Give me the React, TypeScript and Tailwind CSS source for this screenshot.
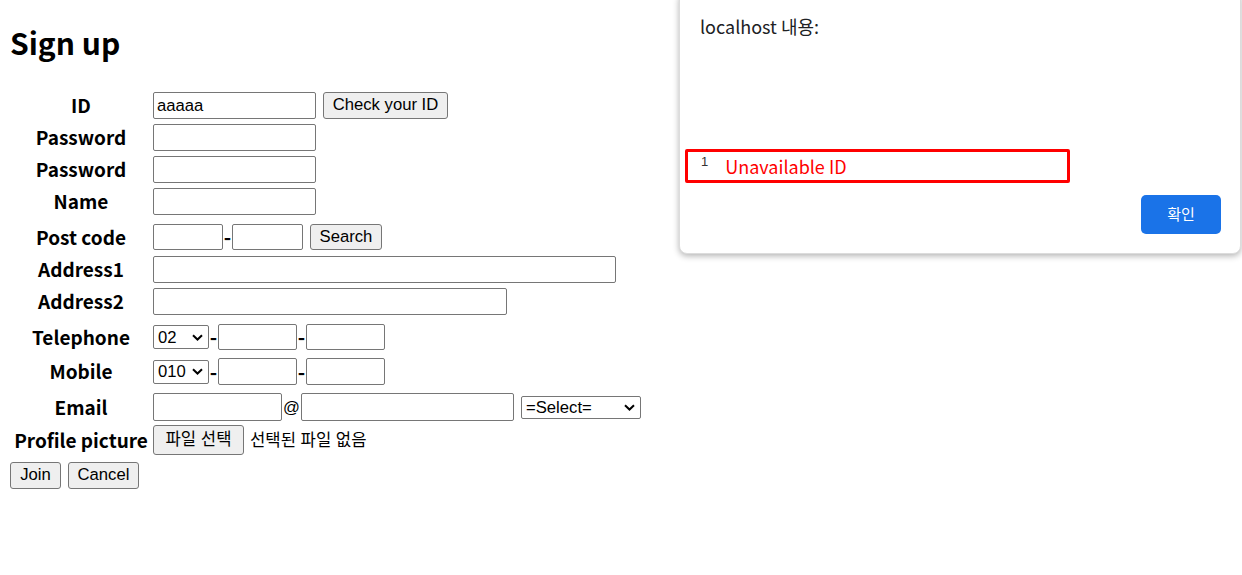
import React from 'react';

const sans = "font-['Liberation_Sans','Noto_Sans_CJK_KR',sans-serif]";
const kr = "font-['Noto_Sans_CJK_KR',sans-serif]";

const inputBase = `border border-[#767676] rounded-[2px] bg-white px-[3px] text-[16.67px] text-black outline-none ${sans}`;
const btnBase = `border border-[#767676] rounded-[3px] bg-[#efefef] text-[16.67px] text-black leading-none flex items-center justify-center ${sans}`;

function Input({ w, h = 'h-[27px]', value }: { w: string; h?: string; value?: string }) {
    return <input type="text" defaultValue={value} className={`${inputBase} ${w} ${h}`} />;
}

function Dash() {
    return <span className={`w-[9px] text-center text-[20px] leading-none font-bold text-black ${kr}`}>-</span>;
}

function Chevron() {
    return (
        <svg width="11" height="7" viewBox="0 0 11 7">
            <path d="M1 1.2 L5.5 5.5 L10 1.2" fill="none" stroke="#000" strokeWidth="2" />
        </svg>
    );
}

function FakeSelect({ w, h = 'h-[24px]', label }: { w: string; h?: string; label: string }) {
    return (
        <div className={`${w} ${h} border border-[#767676] rounded-[2px] bg-white flex items-center justify-between pl-[4px] pr-[5px] text-[16.67px] text-black ${sans}`}>
            <span>{label}</span>
            <Chevron />
        </div>
    );
}

const rows: { label: string; h: string; content: React.ReactNode }[] = [
    {
        label: 'ID',
        h: 'h-[31px]',
        content: (
            <>
                <Input w="w-[163px]" value="aaaaa" />
                <button className={`${btnBase} ml-[7px] w-[125px] h-[27px]`}>Check your ID</button>
            </>
        ),
    },
    { label: 'Password', h: 'h-[33px]', content: <Input w="w-[163px]" /> },
    { label: 'Password', h: 'h-[31px]', content: <Input w="w-[163px]" /> },
    { label: 'Name', h: 'h-[33px]', content: <Input w="w-[163px]" /> },
    {
        label: 'Post code',
        h: 'h-[38px]',
        content: (
            <>
                <Input w="w-[70px]" h="h-[26px]" />
                <Dash />
                <Input w="w-[71px]" h="h-[26px]" />
                <button className={`${btnBase} ml-[7px] w-[72px] h-[26px]`}>Search</button>
            </>
        ),
    },
    { label: 'Address1', h: 'h-[27px]', content: <Input w="w-[463px]" /> },
    { label: 'Address2', h: 'h-[37px]', content: <Input w="w-[354px]" /> },
    {
        label: 'Telephone',
        h: 'h-[34px]',
        content: (
            <>
                <FakeSelect w="w-[56px]" label="02" />
                <Dash />
                <Input w="w-[79px]" h="h-[26px]" />
                <Dash />
                <Input w="w-[79px]" h="h-[26px]" />
            </>
        ),
    },
    {
        label: 'Mobile',
        h: 'h-[35px]',
        content: (
            <>
                <FakeSelect w="w-[56px]" label="010" />
                <Dash />
                <Input w="w-[79px]" />
                <Dash />
                <Input w="w-[79px]" />
            </>
        ),
    },
    {
        label: 'Email',
        h: 'h-[36px]',
        content: (
            <>
                <Input w="w-[129px]" h="h-[28px]" />
                <span className={`w-[19px] text-center text-[16.67px] text-black ${sans}`}>@</span>
                <Input w="w-[213px]" h="h-[28px]" />
                <div className="ml-[7px]">
                    <FakeSelect w="w-[120px]" h="h-[23px]" label="=Select=" />
                </div>
            </>
        ),
    },
    {
        label: 'Profile picture',
        h: 'h-[30px]',
        content: (
            <>
                <button className={`${btnBase} w-[91px] h-[30px]`}>파일 선택</button>
                <span className={`ml-[6px] text-[16.67px] text-black ${sans}`}>선택된 파일 없음</span>
            </>
        ),
    },
];

function AlertDialog() {
    return (
        <div className="absolute left-[679px] top-[-8px] w-[562px] h-[262px] bg-white rounded-lg border border-[#dcdcdc] shadow-[0_2px_6px_rgba(0,0,0,0.3)] flex flex-col">
            <div className={`mt-[21px] pl-[20px] text-[18px] leading-[24px] text-[#202124] ${kr}`}>localhost 내용:</div>
            <div className="mt-[111px] ml-[5px] w-[385px] h-[34px] border-[3px] border-[#ff0000] rounded-[2px] flex">
                <span className={`ml-[13px] mt-[2px] text-[13px] leading-[16px] text-[#333] ${sans}`}>1</span>
                <span className={`ml-[17px] mt-[1px] text-[18px] leading-[26px] text-[#f00] ${kr}`}>Unavailable ID</span>
            </div>
            <div className="mt-[12px] flex justify-end pr-[19px]">
                <button className={`w-[80px] h-[39px] rounded-[5px] bg-[#1a73e8] text-white text-[15px] ${kr}`}>확인</button>
            </div>
        </div>
    );
}

export default function App() {
    return (
        <div className="relative w-[1242px] h-[575px] bg-white overflow-hidden">
            <div className="px-[10px]">
                <h1 className={`h-[90px] pt-[21px] text-[30px] leading-[42px] font-bold text-black ${kr}`}>Sign up</h1>
                <div className="flex flex-col">
                    {rows.map((row, i) => (
                        <div key={i} className={`flex items-center ${row.h}`}>
                            <div className={`w-[142px] pb-[2px] text-center text-[19px] leading-[27px] font-bold text-black ${kr}`}>
                                {row.label}
                            </div>
                            <div className="ml-[1px] flex items-center">{row.content}</div>
                        </div>
                    ))}
                </div>
                <div className="mt-[7px] flex gap-[7px]">
                    <button className={`${btnBase} w-[51px] h-[27px]`}>Join</button>
                    <button className={`${btnBase} w-[71px] h-[27px]`}>Cancel</button>
                </div>
            </div>
            <AlertDialog />
        </div>
    );
}
